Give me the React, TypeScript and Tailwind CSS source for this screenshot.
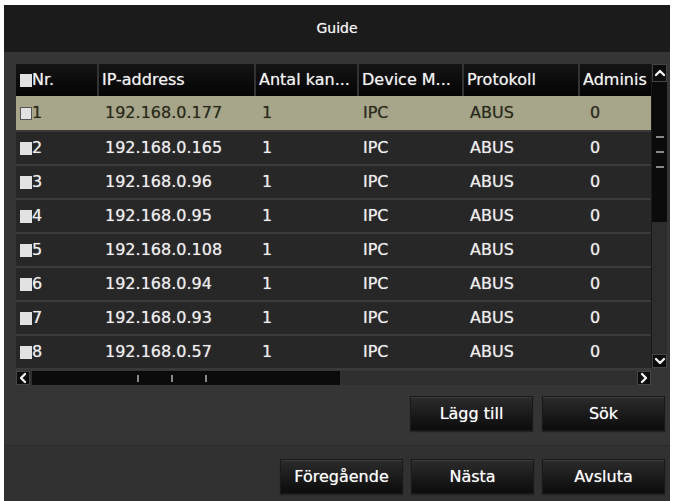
import React from "react";

const cols = [
  { w: "w-[81px]", head: "Nr." },
  { w: "w-[157px]", head: "IP-address" },
  { w: "w-[103px]", head: "Antal kan..." },
  { w: "w-[105px]", head: "Device M..." },
  { w: "w-[116px]", head: "Protokoll" },
  { w: "w-[73px]", head: "Adminis" },
];

const ips = [
  "192.168.0.177",
  "192.168.0.165",
  "192.168.0.96",
  "192.168.0.95",
  "192.168.0.108",
  "192.168.0.94",
  "192.168.0.93",
  "192.168.0.57",
];

function Chev({ dir }: { dir: "up" | "down" | "left" | "right" }) {
  const d =
    dir === "up"
      ? "M2 8 L6 4 L10 8"
      : dir === "down"
      ? "M2 4 L6 8 L10 4"
      : dir === "left"
      ? "M8 2 L4 6 L8 10"
      : "M4 2 L8 6 L4 10";
  return (
    <svg width="12" height="12" viewBox="0 0 12 12">
      <path d={d} fill="none" stroke="#f2f2f2" strokeWidth="2.4" strokeLinecap="round" strokeLinejoin="round" />
    </svg>
  );
}

function Btn({ label }: { label: string }) {
  return (
    <div className="w-[123px] h-[35px] flex items-center justify-center text-[16px] text-white [text-shadow:0_0_1px_rgba(255,255,255,0.6)] bg-gradient-to-b from-[#2c2c2c] to-[#0c0c0c] border border-[#1a1a1a] shadow-[inset_0_1px_0_#3c3c3c,0_1px_1px_#222]">
      {label}
    </div>
  );
}

export default function App() {
  return (
    <div className="w-[673px] h-[501px] bg-white pt-[5px] pl-[4px] pr-[3px] font-['DejaVu_Sans',Arial,sans-serif] overflow-hidden">
      <div className="h-full flex flex-col bg-[#353535]">
        <div className="h-[47px] shrink-0 bg-[#1b1b1b] flex items-center justify-center text-[#f4f4f4] text-[14px] [text-shadow:0_0_1px_rgba(255,255,255,0.6)]">
          Guide
        </div>
        <div className="flex-1 flex flex-col">
          <div className="pl-[12px] pr-[3px] pt-[12px]">
            <div className="flex">
              <div className="w-[635px] flex flex-col">
                {/* header */}
                <div className="h-[32px] flex bg-gradient-to-b from-[#151515] to-[#050505] text-[#f2f2f2] text-[16px] [text-shadow:0_0_1px_rgba(255,255,255,0.6)]">
                  {cols.map((c, i) => (
                    <div
                      key={i}
                      className={`${c.w} h-full flex items-center ${i > 0 ? "border-l-2 border-[#333] pl-[3px]" : "pl-[4px]"}`}
                    >
                      {i === 0 && <div className="w-[12px] h-[13px] bg-[#e2e2e2]" />}
                      <span className="whitespace-nowrap overflow-hidden">{c.head}</span>
                    </div>
                  ))}
                </div>
                {/* rows */}
                {ips.map((ip, r) => {
                  const sel = r === 0;
                  return (
                    <div
                      key={r}
                      className={`h-[34px] flex text-[16px] ${
                        sel
                          ? "bg-[#a7a68b] text-[#2a2a1c] [text-shadow:0_0_1px_rgba(40,40,20,0.5)]"
                          : "bg-[#272727] text-[#ededed] border-t-2 border-[#3a3a3a] [text-shadow:0_0_1px_rgba(255,255,255,0.6)]"
                      }`}
                    >
                      <div className="w-[81px] flex items-center pl-[4px]">
                        <div
                          className={`w-[12px] h-[13px] bg-[#e2e2e2] ${sel ? "border border-[#555]" : ""}`}
                        />
                        <span>{r + 1}</span>
                      </div>
                      <div className="w-[157px] flex items-center pl-[8px]">{ip}</div>
                      <div className="w-[103px] flex items-center pl-[8px]">1</div>
                      <div className="w-[105px] flex items-center pl-[6px]">IPC</div>
                      <div className="w-[116px] flex items-center pl-[8px]">ABUS</div>
                      <div className="w-[73px] flex items-center pl-[12px]">0</div>
                    </div>
                  );
                })}
                <div className="h-[2px] bg-[#3a3a3a]" />
                {/* horizontal scrollbar */}
                <div className="h-[14px] mt-[1px] flex items-stretch bg-[#2f2f2f]">
                  <div className="w-[14px] bg-[#0c0c0c] border border-[#444] flex items-center justify-center">
                    <Chev dir="left" />
                  </div>
                  <div className="w-[308px] ml-[2px] bg-[#0b0b0b] flex items-center pl-[105px] gap-[32px]">
                    <div className="w-[2px] h-[7px] bg-[#888]" />
                    <div className="w-[2px] h-[7px] bg-[#888]" />
                    <div className="w-[2px] h-[7px] bg-[#888]" />
                  </div>
                  <div className="flex-1" />
                  <div className="w-[14px] bg-[#0c0c0c] border border-[#444] flex items-center justify-center">
                    <Chev dir="right" />
                  </div>
                </div>
              </div>
              {/* vertical scrollbar */}
              <div className="w-[16px] h-[304px] flex flex-col bg-[#2d2d2d] border-l border-[#1a1a1a]">
                <div className="h-[18px] bg-[#0c0c0c] border border-[#444] flex items-center justify-center">
                  <Chev dir="up" />
                </div>
                <div className="h-[140px] bg-[#0b0b0b] flex flex-col items-center justify-center gap-[13px]">
                  <div className="w-[8px] h-[2px] bg-[#888]" />
                  <div className="w-[8px] h-[2px] bg-[#888]" />
                  <div className="w-[8px] h-[2px] bg-[#888]" />
                </div>
                <div className="flex-1" />
                <div className="h-[14px] bg-[#0c0c0c] border border-[#444] flex items-center justify-center">
                  <Chev dir="down" />
                </div>
              </div>
            </div>
          </div>
          <div className="flex justify-end gap-[9px] pr-[5px] mt-[11px]">
            <Btn label="Lägg till" />
            <Btn label="Sök" />
          </div>
          <div className="flex-1" />
          <div className="h-[56px] bg-[#313131] border-t border-[#2c2c2c] flex items-start justify-end gap-[8px] pr-[5px] pt-[13px]">
            <Btn label="Föregående" />
            <Btn label="Nästa" />
            <Btn label="Avsluta" />
          </div>
        </div>
      </div>
    </div>
  );
}
